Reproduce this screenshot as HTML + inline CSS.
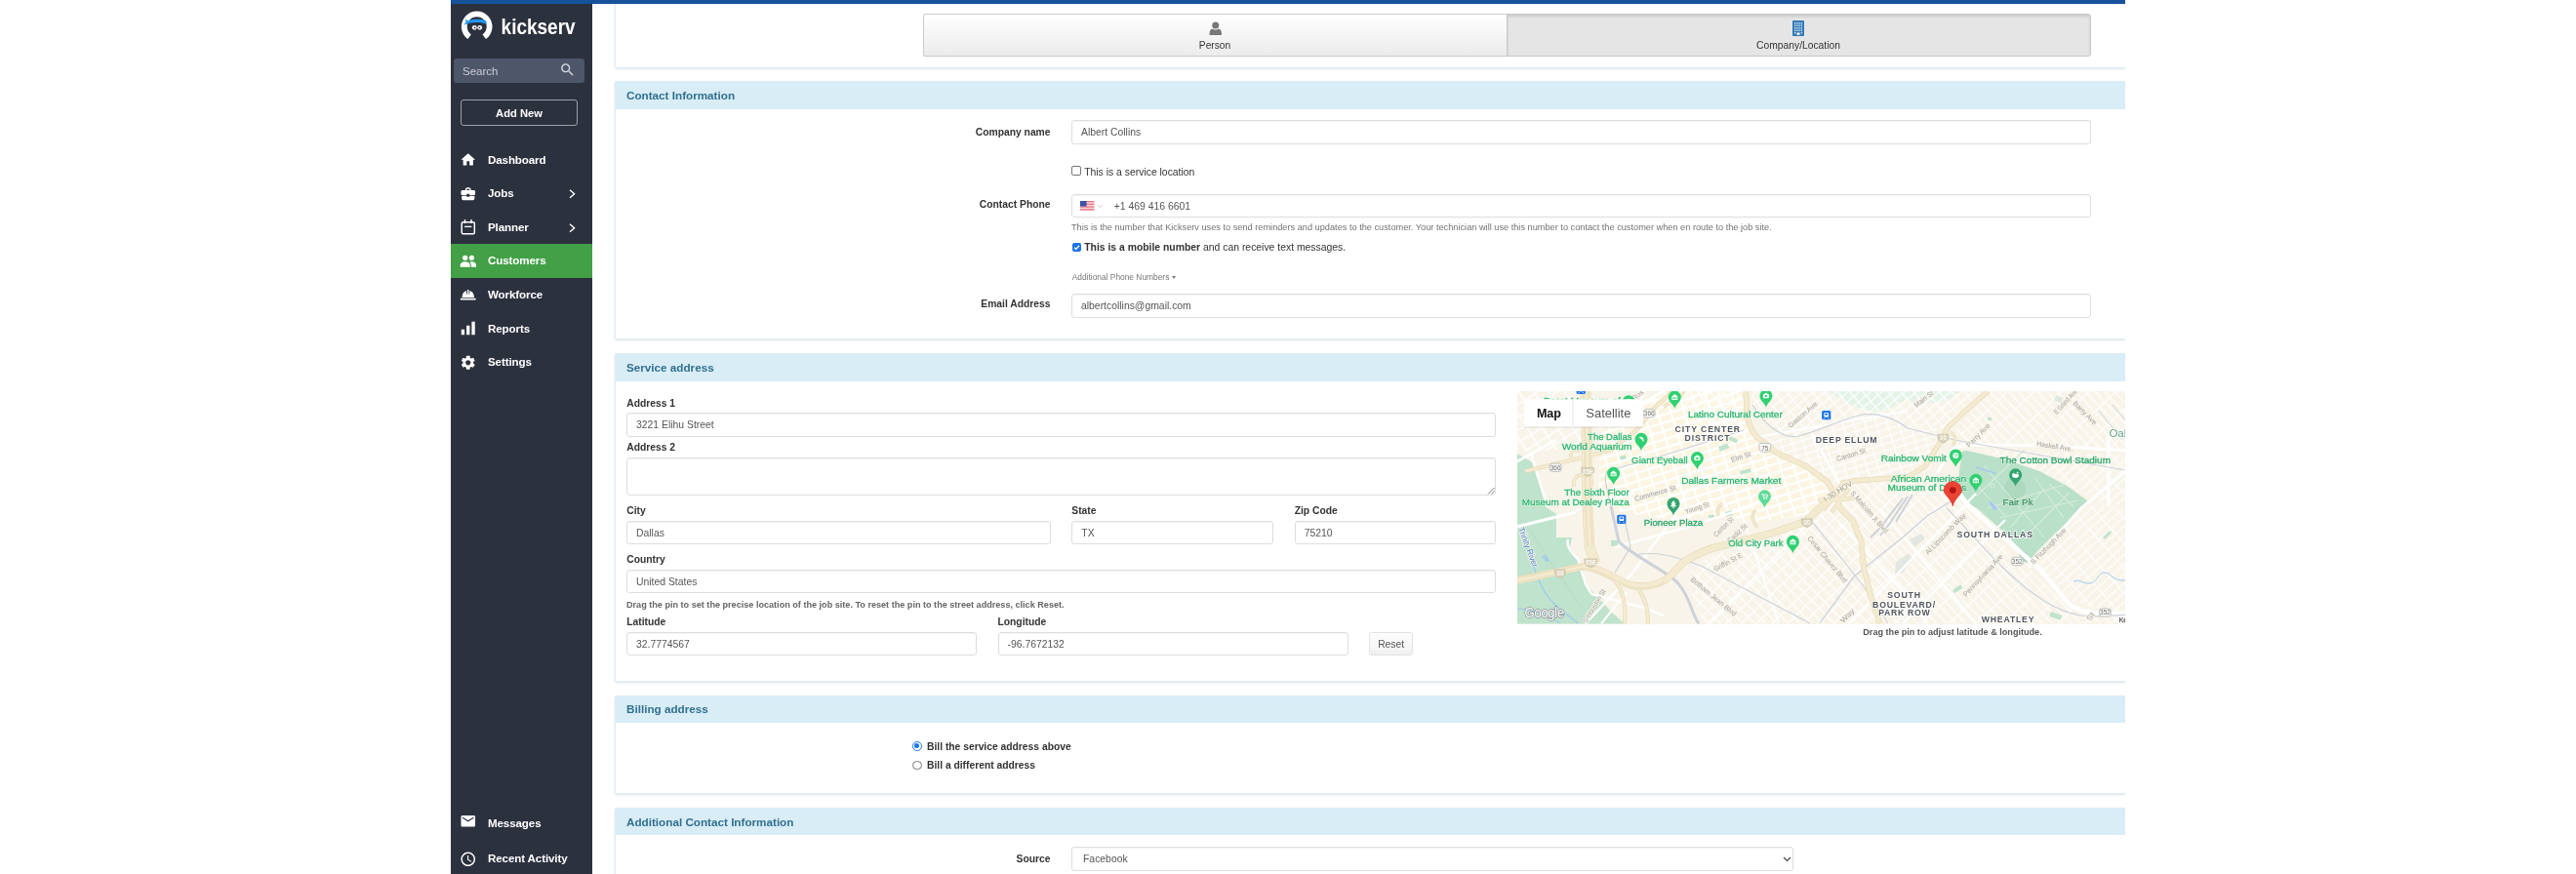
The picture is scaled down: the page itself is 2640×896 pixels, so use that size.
<!DOCTYPE html>
<html lang="en">
<head>
<meta charset="utf-8">
<title>Kickserv - Edit Customer</title>
<style>
*{box-sizing:border-box}
html,body{margin:0;padding:0}
body{width:2640px;height:896px;background:#fff;position:relative;overflow:hidden;font-family:"Liberation Sans",sans-serif;font-size:10.3px;color:#333}
#app{will-change:transform;position:absolute;left:462px;top:0;width:1716px;height:896px;overflow:hidden;background:#fff}
.abs{position:absolute}
#topbar{position:absolute;left:0;top:0;width:1716px;height:4px;background:#16539a;z-index:5}
#side{position:absolute;left:0;top:0;width:145px;height:896px;background:#2c313e}
.nav{position:absolute;left:0;width:145px;height:35px;color:#fff;font-weight:bold;font-size:11.6px;letter-spacing:-.12px}
.nav span{position:absolute;left:38px;top:-1px;line-height:35px;white-space:nowrap}
.nav svg{position:absolute}
.nav.on{background:#43a047}
.panel{position:absolute;left:168px;width:1600px;background:#fff;border:1px solid #dcedf5;border-radius:2px;box-shadow:0 1px 3px rgba(0,0,0,.11)}
.ph{position:absolute;left:169px;width:1600px;height:28.200px;margin-top:.8px;background:#d9edf7;border-radius:1px 1px 0 0;color:#31708f;font-weight:bold;font-size:11.7px;line-height:28.400px;padding-left:11px;white-space:nowrap}
.lbl{position:absolute;font-weight:bold;white-space:nowrap;color:#333;line-height:12px;margin-top:.9px}
.rlbl{position:absolute;font-weight:bold;white-space:nowrap;color:#333;line-height:12px;text-align:right;width:200px;margin-top:.9px}
.inp{position:absolute;height:24.500px;border:1px solid #dedede;border-radius:3px;background:#fff;box-shadow:inset 0 1px 1px rgba(0,0,0,.04);color:#555;line-height:23.800px;padding-left:9px;white-space:nowrap;overflow:hidden;font-size:10.4px}
.t{position:absolute;white-space:nowrap;line-height:12px;margin-top:.9px}
</style>
</head>
<body>
<div id="app">

<!-- SIDEBAR -->
<div id="side">
  <svg class="abs" style="left:0;top:0" width="145" height="50" viewBox="0 0 145 50">
    <path d="M19.120 37.740A12.900 12.900 0 1 1 34.280 37.740" fill="none" stroke="#fff" stroke-width="5.800"/>
    <path d="M17.300 24.600C20 22.500 33.500 22.500 36.600 24.900L36.200 21.200C32 19.300 21 19.300 17.600 21.400Z" fill="#2196f3"/>
    <path d="M18 21.800L14.800 19.200L15.600 22.300L13.400 25.600L17.600 24.300Z" fill="#2196f3"/>
    <circle cx="24.300" cy="28.300" r="2.400" fill="#fff"/><circle cx="29.700" cy="28.300" r="2.400" fill="#fff"/>
    <circle cx="24.600" cy="28.400" r=".9" fill="#2c313e"/><circle cx="29.400" cy="28.400" r=".9" fill="#2c313e"/>
    <text x="51.600" y="34.500" font-family="Liberation Sans, sans-serif" font-size="22.800" font-weight="bold" fill="#fff" textLength="76" lengthAdjust="spacingAndGlyphs">kickserv</text>
  </svg>
  <div class="abs" id="search" style="left:3px;top:60px;width:134px;height:25px;background:#4e576a;border-radius:3px"></div>
  <div class="t" style="left:12px;top:66.300px;font-size:11.500px;color:#c9cdd6;line-height:13px">Search</div>
  <svg class="abs" style="left:110.500px;top:63.200px" width="17" height="17" viewBox="0 0 24 24"><path fill="#d5d8df" d="M15.500 14h-.79l-.28-.27C15.410 12.590 16 11.110 16 9.500 16 5.910 13.090 3 9.500 3S3 5.910 3 9.500 5.910 16 9.500 16c1.610 0 3.090-.59 4.230-1.570l.27.28v.79l5 4.990L20.490 19l-4.990-5zm-6 0C7.010 14 5 11.990 5 9.500S7.010 5 9.500 5 14 7.010 14 9.500 11.990 14 9.500 14z"/></svg>
  <div class="abs" id="addnew" style="left:10px;top:102px;width:120px;height:27px;border:1px solid #9da1aa;border-radius:3px;color:#fff;font-weight:bold;font-size:11.200px;line-height:26px;text-align:center">Add New</div>
  <div class="nav" style="top:146.5px"><svg style="left:8.950px;top:8.750px" width="17.500" height="17.500" viewBox="0 0 24 24"><path fill="#fff" d="M10 20v-6h4v6h5v-8h3L12 3 2 12h3v8z"/></svg><span>Dashboard</span></div>
  <div class="nav" style="top:181px"><svg style="left:8.950px;top:8.750px" width="17.500" height="17.500" viewBox="0 0 24 24"><path fill="#fff" d="M10 16v-1H3.010L3 19c0 1.110.89 2 2 2h14c1.110 0 2-.89 2-2v-4h-7v1h-4zm10-9h-4.010V5l-2-2h-4l-2 2v2H4c-1.100 0-2 .9-2 2v3c0 1.110.89 2 2 2h6v-2h4v2h6c1.100 0 2-.9 2-2V9c0-1.100-.9-2-2-2zm-6 0h-4V5h4v2z"/></svg><svg style="left:121px;top:13px" width="7" height="9.500" viewBox="0 0 7 9.500"><path d="M1 .8l4.600 3.950L1 8.700" fill="none" stroke="#fff" stroke-width="1.400"/></svg><span>Jobs</span></div>
  <div class="nav" style="top:215.5px"><svg style="left:8.950px;top:8.750px" width="17.500" height="17.500" viewBox="0 0 24 24"><rect x="3" y="5" width="18" height="16.500" rx="2" fill="none" stroke="#fff" stroke-width="2"/><path d="M7.500 1.500v5.500M16.500 1.500v5.500M7 11.500h10" stroke="#fff" stroke-width="2" fill="none"/></svg><svg style="left:121px;top:13px" width="7" height="9.500" viewBox="0 0 7 9.500"><path d="M1 .8l4.600 3.950L1 8.700" fill="none" stroke="#fff" stroke-width="1.400"/></svg><span>Planner</span></div>
  <div class="nav on" style="top:250px"><svg style="left:8.950px;top:8.750px" width="17.500" height="17.500" viewBox="0 0 24 24"><circle cx="7.800" cy="7.300" r="3.700" fill="#fff"/><circle cx="17" cy="7.300" r="3.500" fill="#fff"/><path fill="#fff" d="M.8 20.200v-2.400c0-3.200 3.200-5.100 7-5.100s7 1.900 7 5.100v2.400z"/><path fill="#fff" d="M16.200 20.200v-2.600c0-1.900-.8-3.400-2.100-4.500.9-.3 1.900-.4 2.900-.4 3.600 0 6.400 1.800 6.400 4.900v2.600z"/></svg><span>Customers</span></div>
  <div class="nav" style="top:284.5px"><svg style="left:8.950px;top:8.750px" width="17.500" height="17.500" viewBox="0 0 24 24"><path fill="#fff" d="M3.500 16.500C3.500 11.500 6 8 9.500 7l.7 5h.8V5.500h2V12h.8l.7-5C18 8 20.500 11.500 20.500 16.500zM2 17.500h20c.6 0 1 .4 1 1v.5c0 .6-.4 1-1 1H2c-.6 0-1-.4-1-1V18.500c0-.6.4-1 1-1z"/></svg><span>Workforce</span></div>
  <div class="nav" style="top:319.5px"><svg style="left:8.950px;top:8.750px" width="17.500" height="17.500" viewBox="0 0 24 24"><path fill="#fff" d="M17 2.500h4.600v18.500H17zM2.400 13.500H7V21H2.400zM9.700 8h4.600v13H9.700z"/></svg><span>Reports</span></div>
  <div class="nav" style="top:354px"><svg style="left:8.950px;top:8.750px" width="17.500" height="17.500" viewBox="0 0 24 24"><path fill="#fff" d="M19.140 12.940c.04-.3.06-.61.06-.94 0-.32-.02-.64-.07-.94l2.030-1.580c.18-.14.23-.41.120-.61l-1.920-3.320c-.12-.22-.37-.29-.59-.22l-2.390.96c-.5-.38-1.030-.7-1.620-.94l-.36-2.540c-.04-.24-.24-.41-.48-.41h-3.840c-.24 0-.43.170-.47.410l-.36 2.540c-.59.240-1.130.570-1.620.94l-2.390-.96c-.22-.08-.47 0-.59.220L2.740 8.870c-.12.210-.08.470.120.610l2.030 1.580c-.05.3-.09.630-.09.940s.02.640.07.940l-2.030 1.580c-.18.140-.23.410-.12.610l1.920 3.320c.12.220.37.290.59.220l2.390-.96c.5.380 1.030.7 1.620.94l.36 2.540c.05.240.24.410.48.410h3.840c.24 0 .44-.17.470-.41l.36-2.540c.59-.24 1.130-.56 1.620-.94l2.390.96c.22.080.47 0 .59-.22l1.920-3.320c.12-.22.07-.47-.12-.61l-2.010-1.580zM12 15.600c-1.980 0-3.600-1.620-3.600-3.600s1.620-3.600 3.600-3.600 3.600 1.620 3.600 3.600-1.620 3.600-3.600 3.600z"/></svg><span>Settings</span></div>
  <div class="nav" style="top:826.5px"><svg style="left:8.950px;top:6.350px" width="17.500" height="17.500" viewBox="0 0 24 24"><path fill="#fff" d="M20 4H4c-1.100 0-1.990.9-1.990 2L2 18c0 1.100.9 2 2 2h16c1.100 0 2-.9 2-2V6c0-1.100-.9-2-2-2zm0 4l-8 5-8-5V6l8 5 8-5v2z"/></svg><span>Messages</span></div>
  <div class="nav" style="top:863px"><svg style="left:8.950px;top:8.750px" width="17.500" height="17.500" viewBox="0 0 24 24"><path fill="#fff" d="M11.990 2C6.470 2 2 6.480 2 12s4.470 10 9.990 10C17.520 22 22 17.520 22 12S17.520 2 11.990 2zM12 20c-4.420 0-8-3.580-8-8s3.580-8 8-8 8 3.580 8 8-3.580 8-8 8zm.5-13H11v6l5.250 3.150.75-1.230-4.500-2.670z"/></svg><span>Recent Activity</span></div>
</div>

<!-- MAIN -->
<div id="main">
  <!-- top panel with type toggle -->
  <div class="panel" style="top:-20px;height:90.300px"></div>

  <!-- type toggle -->
  <div class="abs" style="left:484px;top:14px;width:599px;height:43.5px;border:1px solid #ccc;border-right:none;border-radius:3px 0 0 3px;background:linear-gradient(#fff,#ebebeb);box-shadow:0 1px 0 rgba(0,0,0,.04)"></div>
  <div class="abs" style="left:1082px;top:14px;width:599px;height:43.5px;border:1px solid #c6c6c6;border-radius:0 3px 3px 0;background:#e5e5e5;box-shadow:inset 0 2px 3px rgba(0,0,0,.11)"></div>
  <svg class="abs" style="left:776.5px;top:21.5px" width="13.5" height="14.5" viewBox="0 0 27 29"><circle cx="13.5" cy="8" r="7" fill="#777"/><path d="M1 25.5c0-6.5 2.5-10 6-10.5 2 1.600 4 2.200 6.500 2.200s4.500-.6 6.500-2.200c3.500.5 6 4 6 10.500 0 2-1.500 3.300-3.500 3.300h-18c-2 0-3.500-1.300-3.500-3.300z" fill="#777"/></svg>
  <div class="t" style="left:683px;top:39.900px;width:200px;text-align:center;font-size:10.200px;color:#333">Person</div>
  <svg class="abs" style="left:1375px;top:20.800px" width="12" height="16" viewBox="0 0 24 32"><rect x="0" y="0" width="24" height="32" rx="1.500" fill="#337ab7"/><g fill="#dbe9f5"><rect x="4" y="4" width="2.500" height="3"/><rect x="8.500" y="4" width="2.500" height="3"/><rect x="13" y="4" width="2.500" height="3"/><rect x="17.500" y="4" width="2.500" height="3"/><rect x="4" y="9" width="2.500" height="3"/><rect x="8.500" y="9" width="2.500" height="3"/><rect x="13" y="9" width="2.500" height="3"/><rect x="17.500" y="9" width="2.500" height="3"/><rect x="4" y="14" width="2.500" height="3"/><rect x="8.500" y="14" width="2.500" height="3"/><rect x="13" y="14" width="2.500" height="3"/><rect x="17.500" y="14" width="2.500" height="3"/><rect x="4" y="19" width="2.500" height="3"/><rect x="8.500" y="19" width="2.500" height="3"/><rect x="13" y="19" width="2.500" height="3"/><rect x="17.500" y="19" width="2.500" height="3"/><rect x="4" y="24" width="2.500" height="3"/><rect x="17.500" y="24" width="2.500" height="3"/><rect x="9" y="25" width="6" height="4.500" fill="#fff"/></g></svg>
  <div class="t" style="left:1281px;top:39.800px;width:200px;text-align:center;font-size:10.300px;color:#333">Company/Location</div>

  <!-- Contact Information -->
  <div class="panel" style="top:83px;height:264.700px"></div>
  <div class="ph" style="top:83px">Contact Information</div>

  <div class="rlbl" style="left:414.500px;top:129.400px">Company name</div>
  <div class="inp" style="left:636px;top:123.300px;width:1045px">Albert Collins</div>

  <div class="abs" style="left:636.200px;top:170px;width:9.600px;height:9.600px;border:1px solid #767676;border-radius:2px;background:#fff"></div>
  <div class="t" style="left:649.200px;top:170.200px;font-size:10.400px">This is a service location</div>

  <div class="rlbl" style="left:414.500px;top:203.300px">Contact Phone</div>
  <div class="inp" style="left:636px;top:198.700px;width:1045px;padding-left:42.800px">+1 469 416 6601</div>
  <svg class="abs" style="left:645px;top:205.700px" width="14.500" height="10.300" viewBox="0 0 29 20.600"><rect width="29" height="20.600" fill="#fff"/><g fill="#e25465"><rect y="0" width="29" height="1.600"/><rect y="3.170" width="29" height="1.600"/><rect y="6.340" width="29" height="1.600"/><rect y="9.510" width="29" height="1.600"/><rect y="12.680" width="29" height="1.600"/><rect y="15.850" width="29" height="1.600"/><rect y="19" width="29" height="1.600"/></g><rect width="13" height="11.100" fill="#3f51a8"/></svg>
  <svg class="abs" style="left:662.500px;top:209.500px" width="5" height="3.500" viewBox="0 0 10 7"><path d="M1 1l4 4 4-4" fill="none" stroke="#bbb" stroke-width="1.600"/></svg>
  <div class="t" id="help1" style="left:636px;top:227.300px;font-size:9.210px;color:#737373;line-height:10px">This is the number that Kickserv uses to send reminders and updates to the customer. Your technician will use this number to contact the customer when en route to the job site.</div>

  <div class="abs" style="left:636.700px;top:249px;width:9px;height:9px;border-radius:2px;background:#1a73e8"></div>
  <svg class="abs" style="left:636.700px;top:249px" width="9" height="9" viewBox="0 0 18 18"><path d="M4 9.500l3.500 3.500L14 5.500" fill="none" stroke="#fff" stroke-width="2.400"/></svg>
  <div class="t" id="mob" style="left:649.200px;top:247.400px;font-size:10.400px"><b>This is a mobile number</b> and can receive text messages.</div>

  <div class="t" id="addl" style="left:636.700px;top:277.900px;font-size:8.400px;color:#777;line-height:10px">Additional Phone Numbers <span style="display:inline-block;width:0;height:0;border-left:2.600px solid transparent;border-right:2.600px solid transparent;border-top:3px solid #777;vertical-align:1px;margin-left:.5px"></span></div>

  <div class="rlbl" style="left:414.500px;top:305.100px">Email Address</div>
  <div class="inp" style="left:636px;top:301px;width:1045px">albertcollins@gmail.com</div>

  <!-- Service address -->
  <div class="panel" style="top:362px;height:337.200px"></div>
  <div class="ph" style="top:362px">Service address</div>

  <div class="lbl" style="left:180.300px;top:406.700px">Address 1</div>
  <div class="inp" style="left:180px;top:423.300px;width:891.400px">3221 Elihu Street</div>
  <div class="lbl" style="left:180.300px;top:452.600px">Address 2</div>
  <div class="inp" style="left:180px;top:469.400px;width:891.400px;height:39px"></div>
  <svg class="abs" style="left:1062px;top:499px" width="8" height="8" viewBox="0 0 8 8"><path d="M7.500 1L1 7.500M7.500 4.500L4.500 7.500" stroke="#555" stroke-width=".8" fill="none"/></svg>
  <div class="lbl" style="left:180.300px;top:517.100px">City</div>
  <div class="inp" style="left:180px;top:533.600px;width:434.700px">Dallas</div>
  <div class="lbl" style="left:636.300px;top:517.100px">State</div>
  <div class="inp" style="left:636.300px;top:533.600px;width:206.400px">TX</div>
  <div class="lbl" style="left:864.700px;top:517.100px">Zip Code</div>
  <div class="inp" style="left:864.700px;top:533.600px;width:206.700px">75210</div>
  <div class="lbl" style="left:180.300px;top:567.600px">Country</div>
  <div class="inp" style="left:180px;top:583.600px;width:891.400px">United States</div>
  <div class="t" id="help2" style="left:180px;top:614.500px;font-size:9.100px;font-weight:bold;color:#666;line-height:10px">Drag the pin to set the precise location of the job site. To reset the pin to the street address, click Reset.</div>
  <div class="lbl" style="left:180.300px;top:631.300px">Latitude</div>
  <div class="inp" style="left:180px;top:647.800px;width:358.900px">32.7774567</div>
  <div class="lbl" style="left:560.500px;top:631.300px">Longitude</div>
  <div class="inp" style="left:560.500px;top:647.800px;width:359.100px">-96.7672132</div>
  <div class="abs" style="left:940.900px;top:647.800px;width:45.400px;height:24px;border:1px solid #e2e2e2;border-radius:3px;background:linear-gradient(#fdfdfd,#f1f1f1);color:#555;font-size:10.300px;line-height:23.600px;text-align:center">Reset</div>

  <!-- MAP -->
  <div class="abs" id="map" style="left:1093px;top:401.400px;width:640px;height:238.400px;background:#f8f4e8;overflow:hidden"><svg width="640" height="238.4" viewBox="0 0 640 238.4" style="position:absolute;left:0;top:0;font-family:'Liberation Sans',sans-serif">
<defs>
<pattern id="g45" width="8.4" height="11" patternUnits="userSpaceOnUse" patternTransform="rotate(-44)"><path d="M0 .8H8.4M.8 0V11" stroke="#fff" stroke-width="1.2" fill="none"/></pattern>
<pattern id="g45b" width="7.2" height="19" patternUnits="userSpaceOnUse" patternTransform="rotate(-43)"><path d="M0 .8H7.2M.8 0V19" stroke="#fff" stroke-width="1.15" fill="none"/></pattern>
<pattern id="g45c" width="17" height="7.2" patternUnits="userSpaceOnUse" patternTransform="rotate(-42)"><path d="M0 .8H17M.8 0V7.2" stroke="#fff" stroke-width="1.15" fill="none"/></pattern>
<pattern id="gdt" width="13" height="8.200" patternUnits="userSpaceOnUse" patternTransform="rotate(-17)"><rect width="13" height="8.200" fill="#fbf5e1"/><path d="M0 1.100H13M1.100 0V8.200" stroke="#fff" stroke-width="2.200" fill="none"/></pattern>
<pattern id="gnw" width="13" height="11" patternUnits="userSpaceOnUse" patternTransform="rotate(-33)"><path d="M0 1H13M1 0V11" stroke="#fff" stroke-width="1.6" fill="none"/></pattern>
<pattern id="gn" width="10" height="7.5" patternUnits="userSpaceOnUse" patternTransform="rotate(-40)"><path d="M0 .8H10M.8 0V7.5" stroke="#fff" stroke-width="1.25" fill="none"/></pattern>
<pattern id="gde" width="11" height="7" patternUnits="userSpaceOnUse" patternTransform="rotate(-17)"><path d="M0 .8H11M.8 0V7" stroke="#fff" stroke-width="1.3" fill="none"/></pattern>
</defs>
<rect width="640" height="238.4" fill="#f8f4e9"/>
<path d="M318 0L400 0L400 8L372 22L352 18L332 8Z" fill="#e3f3e6"/>
<path d="M400 0L455 0L440 10L410 14L400 8Z" fill="#e6f4e8"/>
<path d="M0 0H66V60L0 62Z" fill="url(#gnw)"/>
<path d="M84 38L100 30L150 0H232L236 28L246 47L266 63L296 77L318 93L326 108L300 126L250 134L200 128L160 132L120 126L98 122L84 110Z" fill="url(#gdt)"/>
<path d="M172 0H232L236 28L246 47L200 40L160 10Z" fill="url(#gn)"/>
<path d="M240 0H482L440 38L400 38C390 30 370 22 350 25S310 38 288 46C270 50 250 30 241 14Z" fill="url(#gn)"/>
<path d="M246 46C258 50 274 50 288 46S330 30 350 25S390 30 400 38L440 38L430 56L418 76L400 84L345 91L330 95L296 76L266 62Z" fill="url(#gde)"/>
<path d="M486 0H640V60L462 54L448 40Z" fill="url(#g45b)"/>
<path d="M470 60L640 66V120L590 112L564 96L535 81L500 69Z" fill="url(#g45c)"/>
<path d="M180 178L240 152L300 133L328 112L345 135L352 155L355 182L362 210L371 238.4H190L176 200Z" fill="url(#g45)"/>
<path d="M345 95L400 88L432 84L450 106L520 178L560 216L600 228L640 229V238.4H375L364 210L357 182L354 154L345 132L332 112Z" fill="url(#g45b)"/>
<path d="M590 116L640 124V226L600 225L566 214L540 184L526 176L552 146L578 121Z" fill="url(#g45c)"/>
<path d="M56 120H66V170L60 168L54 160Z" fill="#f8f4e9"/>
<path d="M0 64L15 73L30 119L40 126V150H56L54 160L60 170L66 178L70 198L88 217L96 226L110 238.4H0Z" fill="#bfe3cc"/>
<path d="M40 128H56V150H40Z" fill="#f8f4e9"/>
<path d="M17 180C22 195 26 205 34 214S50 228 62 238" fill="none" stroke="#9ec5f0" stroke-width="1.100"/>
<path d="M0 223C14 224 24 226 34 232L44 238" fill="none" stroke="#9ec5f0" stroke-width="1"/>
<path d="M25 169l4 6 4-1-3-6z" fill="#a8ccf0"/>
<path d="M8 134C18 150 30 170 44 190S60 215 70 226" fill="none" stroke="#a9d3b9" stroke-width=".8" stroke-dasharray="2 1.500"/>
<path d="M0 139L60 124" stroke="#fff" stroke-width="3.200" fill="none"/>
<path d="M0 72L14 64L40 50" stroke="#fff" stroke-width="2.600" fill="none"/>
<path d="M14 64L31 119" stroke="#fff" stroke-width="2.400" fill="none"/>
<path d="M52 152C50 158 55 166 62 172L70 198L76 208" stroke="#fff" stroke-width="2.400" fill="none"/>
<path d="M70 238.400L102 204L120 184" stroke="#fff" stroke-width="2.400" fill="none"/>
<path d="M76 208L130 222L150 230" stroke="#fff" stroke-width="2.400" fill="none"/>
<path d="M86 238.400L112 206" stroke="#fff" stroke-width="2.200" fill="none"/>
<path d="M60 122L84 116L120 104" stroke="#fff" stroke-width="2.400" fill="none"/>
<path d="M456 61.500L461 61L500 70L535 82L564 97.500L585 113L577 120L565 133L551 146L532 165L524 175L519 173L512.600 159.400L501.600 147L488 135L471 120L459 113L451 105L453 82Z" fill="#b9e0c8"/>
<circle cx="510" cy="100" r="11" fill="#aed9bf"/>
<path d="M512 163C516 160 523 166 525 172C524 177 520 176 517 173Z" fill="#a5d4b6"/>
<g fill="none" stroke="#d5ecdd" stroke-width="1.100"><path d="M470 108L520 60M482 120L560 96M494 130L575 112M505 140L540 100M520 150L566 104M478 76L540 150M465 90L500 128M530 88L560 130M545 95L570 118"/><circle cx="487" cy="97" r="2.200"/></g>
<path d="M470 78L490 84" stroke="#a8c8ef" stroke-width="1.800"/>
<path d="M484 112c3 1 6 5 8 9l-3 1c-3-3-5-6-5-10z" fill="#a8c8ef"/>
<rect x="30" y="27" width="8" height="5" fill="#bfe3cc" transform="rotate(-20 30 27)"/>
<rect x="105" y="67" width="6" height="4" fill="#bfe3cc" transform="rotate(-15 105 67)"/>
<rect x="218" y="46" width="9" height="4" fill="#bfe3cc" transform="rotate(25 218 46)"/>
<rect x="206" y="57" width="10" height="5" fill="#bfe3cc" transform="rotate(-20 206 57)"/>
<rect x="228" y="82" width="11" height="4" fill="#bfe3cc" transform="rotate(-15 228 82)"/>
<rect x="96" y="153" width="7" height="6" fill="#bfe3cc" transform="rotate(0 96 153)"/>
<rect x="196" y="127" width="6" height="3" fill="#bfe3cc" transform="rotate(0 196 127)"/>
<rect x="213" y="124" width="7" height="5" fill="#bfe3cc" transform="rotate(-15 213 124)"/>
<rect x="482" y="27" width="4" height="3" fill="#bfe3cc" transform="rotate(0 482 27)"/>
<rect x="600" y="150" width="10" height="3" fill="#bfe3cc" transform="rotate(-45 600 150)"/>
<rect x="446" y="204" width="10" height="4" fill="#bfe3cc" transform="rotate(-35 446 204)"/>
<rect x="547" y="226" width="12" height="5" fill="#bfe3cc" transform="rotate(20 547 226)"/>
<path d="M388 175l14-9 3 6-10 14-8 3zM402 152l12-6 4 5-11 9z" fill="#e2e8e0"/>
<rect x="552" y="4" width="8" height="6" fill="#dfe9df" transform="rotate(20 552 4)"/>
<path d="M449 100L464 119L537 184L565 218C575 226 590 228 600 228H640" stroke="#fff" stroke-width="4.8" fill="none" stroke-linejoin="round"/>
<path d="M524 180L578 120L640 68" stroke="#fff" stroke-width="3.2" fill="none" stroke-linejoin="round"/>
<path d="M446 60L460 55L545 56L640 62" stroke="#fff" stroke-width="3.2" fill="none" stroke-linejoin="round"/>
<path d="M606 45V119" stroke="#fff" stroke-width="3" fill="none" stroke-linejoin="round"/>
<path d="M430 84L446 60L452 50" stroke="#fff" stroke-width="3" fill="none" stroke-linejoin="round"/>
<path d="M84 38L150 0" stroke="#fff" stroke-width="2.6" fill="none" stroke-linejoin="round"/>
<path d="M100 160L172 140L240 118" stroke="#fff" stroke-width="2.4" fill="none" stroke-linejoin="round"/>
<path d="M120 184L160 130L175 100" stroke="#fff" stroke-width="2.4" fill="none" stroke-linejoin="round"/>
<path d="M330 135L400 210L420 238" stroke="#fff" stroke-width="2.6" fill="none" stroke-linejoin="round"/>
<path d="M371 120L470 238" stroke="#fff" stroke-width="2.4" fill="none" stroke-linejoin="round"/>
<path d="M340 238L470 105" stroke="#fff" stroke-width="2.4" fill="none" stroke-linejoin="round"/>
<path d="M395 238L500 132" stroke="#fff" stroke-width="2.2" fill="none" stroke-linejoin="round"/>
<path d="M196 238L300 134" stroke="#fff" stroke-width="2.2" fill="none" stroke-linejoin="round"/>
<path d="M228 120L268 238" stroke="#fff" stroke-width="2" fill="none" stroke-linejoin="round"/>
<path d="M130 0L120 30L128 60" stroke="#fff" stroke-width="2.2" fill="none" stroke-linejoin="round"/>
<path d="M300 40L330 95" stroke="#fff" stroke-width="2.2" fill="none" stroke-linejoin="round"/>
<path d="M246 47L400 20" stroke="#fff" stroke-width="2" fill="none" stroke-linejoin="round"/>
<g fill="none" stroke="#cdd2da">
<path d="M96 118L104 154C112 164 140 178 158 191S178 228 186 238.400" stroke-width="3"/>
<path d="M110 132L116 160L100 186" stroke-width="1.200"/>
<path d="M96 118C92 100 88 90 92 82L150 66L232 40" stroke-width="1.200"/>
<path d="M241 14C250 30 270 50 288 46S330 30 350 25S390 30 400 38L448 50L640 84" stroke-width="1.200"/>
<path d="M120 168C140 164 160 168 190 180L300 238" stroke-width="1.200"/>
<path d="M303 135L355 200L380 238" stroke-width="1.200"/>
<path d="M310 238L345 190L395 150L420 128L446 112" stroke-width="1.300"/>
<path d="M395 110L372 140L362 150M400 108L380 138L372 148M405 106L388 134" stroke-width="2"/>
<path d="M440 120C470 150 500 190 540 215S600 228 640 229" stroke-width="1.200"/>
<path d="M596 20L620 50M610 14L640 50" stroke-width="1"/>
</g>
<path d="M570 195C576 192 580 198 587 197S596 186 602 186S610 195 623 194" fill="none" stroke="#9ec5f0" stroke-width="1"/>
<path d="M8 82L64.500 68.600L96 60L121 41L144 13.700L160 0" stroke="#e4d8b3" stroke-width="4.300000000000001" fill="none" stroke-linejoin="round"/>
<path d="M171 0C168 6 160 10 150 16" stroke="#e4d8b3" stroke-width="3.6" fill="none" stroke-linejoin="round"/>
<path d="M70 0L71 36L72 119.600L74 160L80 176" stroke="#e4d8b3" stroke-width="10.6" fill="none" stroke-linejoin="round"/>
<path d="M0 194L66 180C82 180 96 190 110 196.500S140 200 151 194C160 188 166 178 171.600 174.500S190 164 200 161L260 146L296 133.300L310 119.600L322 110" stroke="#e4d8b3" stroke-width="7.6" fill="none" stroke-linejoin="round"/>
<path d="M96 190C108 200 112 220 110 238.400M118 198C130 206 134 222 134 238.400" stroke="#e4d8b3" stroke-width="4.1" fill="none" stroke-linejoin="round"/>
<path d="M234.300 0L235.700 27.500C238 36 241 42 245.300 46.700L265.900 63.200L296.100 76.900L318 93.400L327.700 109.800L330.400 119.600L344.200 133.300L352.400 153.900L355.200 181.400L362 208.900L371.600 238.400" stroke="#e4d8b3" stroke-width="5.9" fill="none" stroke-linejoin="round"/>
<path d="M331.800 94.700L344.200 92L400 87.900L417.900 76.900L431.600 54.900L441.200 37.100L461.800 17.800L482.400 0" stroke="#e4d8b3" stroke-width="5.300000000000001" fill="none" stroke-linejoin="round"/>
<path d="M314 122L332 96M322 124L340 100M308 112L345 110" stroke="#e4d8b3" stroke-width="4.1" fill="none" stroke-linejoin="round"/>
<path d="M58 98C56 90 62 84 70 86S78 96 72 100" stroke="#e4d8b3" stroke-width="3.6" fill="none" stroke-linejoin="round"/>
<path d="M56 70C52 64 58 58 64 62" stroke="#e4d8b3" stroke-width="3.1" fill="none" stroke-linejoin="round"/>
<path d="M444 42C450 46 450 52 446 56" stroke="#e4d8b3" stroke-width="3.3000000000000003" fill="none" stroke-linejoin="round"/>
<path d="M206 128C204 122 206 118 210 116M246 140C240 132 240 126 244 122" stroke="#e4d8b3" stroke-width="3.3000000000000003" fill="none" stroke-linejoin="round"/>
<path d="M8 82L64.500 68.600L96 60L121 41L144 13.700L160 0" stroke="#f3ead0" stroke-width="3.2" fill="none" stroke-linejoin="round"/>
<path d="M171 0C168 6 160 10 150 16" stroke="#f3ead0" stroke-width="2.5" fill="none" stroke-linejoin="round"/>
<path d="M70 0L71 36L72 119.600L74 160L80 176" stroke="#f3ead0" stroke-width="9.5" fill="none" stroke-linejoin="round"/>
<path d="M0 194L66 180C82 180 96 190 110 196.500S140 200 151 194C160 188 166 178 171.600 174.500S190 164 200 161L260 146L296 133.300L310 119.600L322 110" stroke="#f3ead0" stroke-width="6.5" fill="none" stroke-linejoin="round"/>
<path d="M96 190C108 200 112 220 110 238.400M118 198C130 206 134 222 134 238.400" stroke="#f3ead0" stroke-width="3" fill="none" stroke-linejoin="round"/>
<path d="M234.300 0L235.700 27.500C238 36 241 42 245.300 46.700L265.900 63.200L296.100 76.900L318 93.400L327.700 109.800L330.400 119.600L344.200 133.300L352.400 153.900L355.200 181.400L362 208.900L371.600 238.400" stroke="#f3ead0" stroke-width="4.8" fill="none" stroke-linejoin="round"/>
<path d="M331.800 94.700L344.200 92L400 87.900L417.900 76.900L431.600 54.900L441.200 37.100L461.800 17.800L482.400 0" stroke="#f3ead0" stroke-width="4.2" fill="none" stroke-linejoin="round"/>
<path d="M314 122L332 96M322 124L340 100M308 112L345 110" stroke="#f3ead0" stroke-width="3" fill="none" stroke-linejoin="round"/>
<path d="M58 98C56 90 62 84 70 86S78 96 72 100" stroke="#f3ead0" stroke-width="2.5" fill="none" stroke-linejoin="round"/>
<path d="M56 70C52 64 58 58 64 62" stroke="#f3ead0" stroke-width="2" fill="none" stroke-linejoin="round"/>
<path d="M444 42C450 46 450 52 446 56" stroke="#f3ead0" stroke-width="2.2" fill="none" stroke-linejoin="round"/>
<path d="M206 128C204 122 206 118 210 116M246 140C240 132 240 126 244 122" stroke="#f3ead0" stroke-width="2.2" fill="none" stroke-linejoin="round"/>
<path d="M68 0L69 36L70 119.600L72 160M73 0L74 36L75 119.600L77 160" stroke="#e3d5ad" stroke-width=".7" fill="none"/>
<path d="M0 192L66 178M0 196L66 182C82 182 96 192 110 198.500S140 202 151 196" stroke="#e3d5ad" stroke-width=".7" fill="none"/>
<rect x="129.2" y="18.5" width="12" height="8.400" rx="3" fill="#f7f7f5" stroke="#b8b8b8" stroke-width=".8"/><text x="135.2" y="25.2" font-size="6.500" fill="#777" text-anchor="middle">366</text>
<rect x="33.1" y="74.1" width="12" height="8.400" rx="3" fill="#f7f7f5" stroke="#b8b8b8" stroke-width=".8"/><text x="39.1" y="80.8" font-size="6.500" fill="#777" text-anchor="middle">366</text>
<rect x="506.29999999999995" y="170.3" width="12" height="8.400" rx="3" fill="#f7f7f5" stroke="#b8b8b8" stroke-width=".8"/><text x="512.3" y="177.0" font-size="6.500" fill="#777" text-anchor="middle">352</text>
<rect x="596.5" y="222.8" width="12" height="8.400" rx="3" fill="#f7f7f5" stroke="#b8b8b8" stroke-width=".8"/><text x="602.5" y="229.5" font-size="6.500" fill="#777" text-anchor="middle">352</text>
<path d="M65.6 78.4h13v4c0 3-6.5 5-6.5 5s-6.5-2-6.5-5z" fill="#d9d2bd" stroke="#c5bda4" stroke-width=".6"/><text x="72.1" y="84.60000000000001" font-size="6.500" font-weight="bold" fill="#fbf8ee" text-anchor="middle">35E</text>
<path d="M68.7 171.9h13v4c0 3-6.5 5-6.5 5s-6.5-2-6.5-5z" fill="#d9d2bd" stroke="#c5bda4" stroke-width=".6"/><text x="75.2" y="178.1" font-size="6.500" font-weight="bold" fill="#fbf8ee" text-anchor="middle">35E</text>
<path d="M38.4 182.9h11v4c0 3-5.5 5-5.5 5s-5.5-2-5.5-5z" fill="#d9d2bd" stroke="#c5bda4" stroke-width=".6"/><text x="43.9" y="189.1" font-size="6.500" font-weight="bold" fill="#fbf8ee" text-anchor="middle">30</text>
<path d="M430.9 44.3h11v4c0 3-5.5 5-5.5 5s-5.5-2-5.5-5z" fill="#d9d2bd" stroke="#c5bda4" stroke-width=".6"/><text x="436.4" y="50.5" font-size="6.500" font-weight="bold" fill="#fbf8ee" text-anchor="middle">30</text>
<path d="M291.3 130.7h11v4c0 3-5.5 5-5.5 5s-5.5-2-5.5-5z" fill="#d9d2bd" stroke="#c5bda4" stroke-width=".6"/><text x="296.8" y="136.89999999999998" font-size="6.500" font-weight="bold" fill="#fbf8ee" text-anchor="middle">30</text>
<path d="M248.500 53.500h10.500l1 1.500-1 6c-2 2-8.500 2-10.500 0l-1-6z" fill="#f7f7f5" stroke="#b8b8b8" stroke-width=".8"/><text x="253.800" y="60.600" font-size="6.500" fill="#777" text-anchor="middle">75</text>
<text transform="translate(121 113) rotate(-15.9)" font-size="7.3" fill="#a3a3a3" stroke="#f8f4e9" stroke-width="1.600" paint-order="stroke" textLength="43.7" lengthAdjust="spacingAndGlyphs">Commerce St</text>
<text transform="translate(220 73) rotate(-18.0)" font-size="7.3" fill="#a3a3a3" stroke="#f8f4e9" stroke-width="1.600" paint-order="stroke" textLength="21.0" lengthAdjust="spacingAndGlyphs">Elm St</text>
<text transform="translate(328 72) rotate(-17.0)" font-size="7.3" fill="#a3a3a3" stroke="#f8f4e9" stroke-width="1.600" paint-order="stroke" textLength="30.8" lengthAdjust="spacingAndGlyphs">Canton St</text>
<text transform="translate(280 38) rotate(-40.6)" font-size="7.3" fill="#a3a3a3" stroke="#f8f4e9" stroke-width="1.600" paint-order="stroke" textLength="36.9" lengthAdjust="spacingAndGlyphs">Gaston Ave</text>
<text transform="translate(409 17) rotate(-37.9)" font-size="7.3" fill="#a3a3a3" stroke="#f8f4e9" stroke-width="1.600" paint-order="stroke" textLength="22.8" lengthAdjust="spacingAndGlyphs">Main St</text>
<text transform="translate(463 58) rotate(-45.0)" font-size="7.3" fill="#a3a3a3" stroke="#f8f4e9" stroke-width="1.600" paint-order="stroke" textLength="31.1" lengthAdjust="spacingAndGlyphs">Parry Ave</text>
<text transform="translate(532 56) rotate(9.2)" font-size="7.3" fill="#a3a3a3" stroke="#f8f4e9" stroke-width="1.600" paint-order="stroke" textLength="37.5" lengthAdjust="spacingAndGlyphs">Haskell Ave.</text>
<text transform="translate(553 24) rotate(-47.6)" font-size="7.3" fill="#a3a3a3" stroke="#f8f4e9" stroke-width="1.600" paint-order="stroke" textLength="31.1" lengthAdjust="spacingAndGlyphs">E Grand Ave</text>
<text transform="translate(569 13) rotate(45.0)" font-size="7.3" fill="#a3a3a3" stroke="#f8f4e9" stroke-width="1.600" paint-order="stroke" textLength="31.1" lengthAdjust="spacingAndGlyphs">Barry Ave</text>
<text transform="translate(341 105) rotate(48.7)" font-size="7.3" fill="#a3a3a3" stroke="#f8f4e9" stroke-width="1.600" paint-order="stroke" textLength="54.6" lengthAdjust="spacingAndGlyphs">S Malcolm X Blvd</text>
<text transform="translate(316 114) rotate(-32.7)" font-size="8" fill="#a09a86" stroke="#f8f4e9" stroke-width="1.600" paint-order="stroke" textLength="33.3" lengthAdjust="spacingAndGlyphs">I-30 HOV</text>
<text transform="translate(203 185) rotate(-28.2)" font-size="7.3" fill="#a3a3a3" stroke="#f8f4e9" stroke-width="1.600" paint-order="stroke" textLength="31.8" lengthAdjust="spacingAndGlyphs">Griffin St E</text>
<text transform="translate(297 151) rotate(50.4)" font-size="7.3" fill="#a3a3a3" stroke="#f8f4e9" stroke-width="1.600" paint-order="stroke" textLength="59.7" lengthAdjust="spacingAndGlyphs">Cesar Chavez Blvd</text>
<text transform="translate(177 194) rotate(39.4)" font-size="7.3" fill="#a3a3a3" stroke="#f8f4e9" stroke-width="1.600" paint-order="stroke" textLength="58.3" lengthAdjust="spacingAndGlyphs">Botham Jean Blvd</text>
<text transform="translate(71 238) rotate(-58.8)" font-size="7.3" fill="#a3a3a3" stroke="#f8f4e9" stroke-width="1.600" paint-order="stroke" textLength="38.6" lengthAdjust="spacingAndGlyphs">S Houston St</text>
<text transform="translate(421 168) rotate(-45.7)" font-size="7.3" fill="#a3a3a3" stroke="#f8f4e9" stroke-width="1.600" paint-order="stroke" textLength="55.9" lengthAdjust="spacingAndGlyphs">Al Lipscomb Way</text>
<text transform="translate(460 211) rotate(-47.2)" font-size="7.3" fill="#a3a3a3" stroke="#f8f4e9" stroke-width="1.600" paint-order="stroke" textLength="55.9" lengthAdjust="spacingAndGlyphs">Pennsylvania Ave</text>
<text transform="translate(529 178) rotate(-45.8)" font-size="7.3" fill="#a3a3a3" stroke="#f8f4e9" stroke-width="1.600" paint-order="stroke" textLength="48.8" lengthAdjust="spacingAndGlyphs">S Fitzhugh Ave</text>
<text transform="translate(204 150) rotate(-45.0)" font-size="7.3" fill="#a3a3a3" stroke="#f8f4e9" stroke-width="1.600" paint-order="stroke" textLength="25.5" lengthAdjust="spacingAndGlyphs">Canton St</text>
<text transform="translate(218 156) rotate(-43.4)" font-size="7.3" fill="#a3a3a3" stroke="#f8f4e9" stroke-width="1.600" paint-order="stroke" textLength="24.8" lengthAdjust="spacingAndGlyphs">Cadiz St</text>
<text transform="translate(173 126) rotate(-18.4)" font-size="7.3" fill="#a3a3a3" stroke="#f8f4e9" stroke-width="1.600" paint-order="stroke" textLength="25.3" lengthAdjust="spacingAndGlyphs">Young St</text>
<text transform="translate(334 238) rotate(-45.0)" font-size="7.3" fill="#a3a3a3" stroke="#f8f4e9" stroke-width="1.600" paint-order="stroke" textLength="17.0" lengthAdjust="spacingAndGlyphs">Way</text>
<text transform="translate(587 236) rotate(-54.5)" font-size="7.3" fill="#a3a3a3" stroke="#f8f4e9" stroke-width="1.600" paint-order="stroke" textLength="8.6" lengthAdjust="spacingAndGlyphs">St</text>
<text transform="translate(120 10) rotate(-38.7)" font-size="7.3" fill="#a3a3a3" stroke="#f8f4e9" stroke-width="1.600" paint-order="stroke" textLength="12.8" lengthAdjust="spacingAndGlyphs">Ros</text>
<text transform="translate(1 141) rotate(69.4)" font-size="8.6" fill="#3f7fd6" stroke="#f8f4e9" stroke-width="1.600" paint-order="stroke" textLength="42.7" lengthAdjust="spacingAndGlyphs">Trinity River</text>
<rect x="60.6" y="-6.1" width="9.200" height="9.200" rx="1.500" fill="#1a73e8"/><rect x="62.800000000000004" y="-4.3" width="4.800" height="4.600" rx="1" fill="#fff"/><rect x="63.7" y="-3.4" width="3" height="1.800" fill="#1a73e8"/><path d="M63.400000000000006 1.1l-.8 1.200M67.0 1.1l.8 1.200" stroke="#fff" stroke-width=".8"/>
<rect x="312.09999999999997" y="20.1" width="9.200" height="9.200" rx="1.500" fill="#1a73e8"/><rect x="314.3" y="21.9" width="4.800" height="4.600" rx="1" fill="#fff"/><rect x="315.2" y="22.8" width="3" height="1.800" fill="#1a73e8"/><path d="M314.9 27.3l-.8 1.200M318.5 27.3l.8 1.200" stroke="#fff" stroke-width=".8"/>
<rect x="102.2" y="126.70000000000002" width="9.200" height="9.200" rx="1.500" fill="#1a73e8"/><rect x="104.39999999999999" y="128.5" width="4.800" height="4.600" rx="1" fill="#fff"/><rect x="105.3" y="129.4" width="3" height="1.800" fill="#1a73e8"/><path d="M105.0 133.9l-.8 1.200M108.6 133.9l.8 1.200" stroke="#fff" stroke-width=".8"/>
<g style="filter:drop-shadow(0 0 .45px #fff) drop-shadow(0 0 .45px #fff) drop-shadow(0 0 .6px #fff)">
<text x="27" y="12.8" font-size="9.2" fill="#2eb56f" stroke="#2eb56f" stroke-width=".32" text-anchor="start" textLength="79" lengthAdjust="spacingAndGlyphs">Perot Museum of</text>
<text x="175" y="26.8" font-size="9.2" fill="#2eb56f" stroke="#2eb56f" stroke-width=".32" text-anchor="start" textLength="96.7" lengthAdjust="spacingAndGlyphs">Latino Cultural Center</text>
<text x="117.4" y="49.7" font-size="9.2" fill="#2eb56f" stroke="#2eb56f" stroke-width=".32" text-anchor="end" textLength="45.3" lengthAdjust="spacingAndGlyphs">The Dallas</text>
<text x="117.4" y="60" font-size="9.2" fill="#2eb56f" stroke="#2eb56f" stroke-width=".32" text-anchor="end" textLength="71.7" lengthAdjust="spacingAndGlyphs">World Aquarium</text>
<text x="117.1" y="74.1" font-size="9.2" fill="#2eb56f" stroke="#2eb56f" stroke-width=".32" text-anchor="start" textLength="57.6" lengthAdjust="spacingAndGlyphs">Giant Eyeball</text>
<text x="114.7" y="107.4" font-size="9.2" fill="#2eb56f" stroke="#2eb56f" stroke-width=".32" text-anchor="end" textLength="66.4" lengthAdjust="spacingAndGlyphs">The Sixth Floor</text>
<text x="114.7" y="117.4" font-size="9.2" fill="#2eb56f" stroke="#2eb56f" stroke-width=".32" text-anchor="end" textLength="109.9" lengthAdjust="spacingAndGlyphs">Museum at Dealey Plaza</text>
<text x="168.2" y="95.4" font-size="9.2" fill="#2eb56f" stroke="#2eb56f" stroke-width=".32" text-anchor="start" textLength="102.1" lengthAdjust="spacingAndGlyphs">Dallas Farmers Market</text>
<text x="372.7" y="71.8" font-size="9.2" fill="#2eb56f" stroke="#2eb56f" stroke-width=".32" text-anchor="start" textLength="67.1" lengthAdjust="spacingAndGlyphs">Rainbow Vomit</text>
<text x="460.2" y="92.6" font-size="9.2" fill="#2eb56f" stroke="#2eb56f" stroke-width=".32" text-anchor="end" textLength="77.4" lengthAdjust="spacingAndGlyphs">African American</text>
<text x="460.2" y="102.4" font-size="9.2" fill="#2eb56f" stroke="#2eb56f" stroke-width=".32" text-anchor="end" textLength="80.7" lengthAdjust="spacingAndGlyphs">Museum of Dallas</text>
<text x="494.6" y="74.2" font-size="9.2" fill="#2fa266" stroke="#2fa266" stroke-width=".32" text-anchor="start" textLength="113.4" lengthAdjust="spacingAndGlyphs">The Cotton Bowl Stadium</text>
<text x="497.5" y="117" font-size="9.2" fill="#35905c" stroke="#35905c" stroke-width=".32" text-anchor="start" textLength="31.1" lengthAdjust="spacingAndGlyphs">Fair Pk</text>
<text x="129.8" y="138.1" font-size="9.2" fill="#2fa266" stroke="#2fa266" stroke-width=".32" text-anchor="start" textLength="60.4" lengthAdjust="spacingAndGlyphs">Pioneer Plaza</text>
<text x="216.2" y="159.4" font-size="9.2" fill="#2eb56f" stroke="#2eb56f" stroke-width=".32" text-anchor="start" textLength="56.3" lengthAdjust="spacingAndGlyphs">Old City Park</text>
<text x="606.400" y="46.900" font-size="11.500" fill="#5e9b7c" stroke="#fff" stroke-width="1.600" stroke-opacity=".8" paint-order="stroke">Oak Cliff</text>
</g>
<text x="161.6" y="41.9" font-size="8.700" font-weight="bold" fill="#50555d" stroke="#fff" stroke-width="1.800" stroke-opacity=".8" paint-order="stroke" text-anchor="start" textLength="66.5" lengthAdjust="spacing">CITY CENTER</text>
<text x="171.6" y="51.1" font-size="8.700" font-weight="bold" fill="#50555d" stroke="#fff" stroke-width="1.800" stroke-opacity=".8" paint-order="stroke" text-anchor="start" textLength="46" lengthAdjust="spacing">DISTRICT</text>
<text x="305.7" y="53.3" font-size="8.700" font-weight="bold" fill="#50555d" stroke="#fff" stroke-width="1.800" stroke-opacity=".8" paint-order="stroke" text-anchor="start" textLength="62.9" lengthAdjust="spacing">DEEP ELLUM</text>
<text x="450.5" y="149.8" font-size="8.700" font-weight="bold" fill="#50555d" stroke="#fff" stroke-width="1.800" stroke-opacity=".8" paint-order="stroke" text-anchor="start" textLength="77.5" lengthAdjust="spacing">SOUTH DALLAS</text>
<text x="379.2" y="211.9" font-size="8.700" font-weight="bold" fill="#50555d" stroke="#fff" stroke-width="1.800" stroke-opacity=".8" paint-order="stroke" text-anchor="start" textLength="33.8" lengthAdjust="spacing">SOUTH</text>
<text x="364.1" y="221.9" font-size="8.700" font-weight="bold" fill="#50555d" stroke="#fff" stroke-width="1.800" stroke-opacity=".8" paint-order="stroke" text-anchor="start" textLength="64" lengthAdjust="spacing">BOULEVARD/</text>
<text x="370.3" y="230.1" font-size="8.700" font-weight="bold" fill="#50555d" stroke="#fff" stroke-width="1.800" stroke-opacity=".8" paint-order="stroke" text-anchor="start" textLength="52.4" lengthAdjust="spacing">PARK ROW</text>
<text x="475.8" y="236.7" font-size="8.700" font-weight="bold" fill="#50555d" stroke="#fff" stroke-width="1.800" stroke-opacity=".8" paint-order="stroke" text-anchor="start" textLength="53.7" lengthAdjust="spacing">WHEATLEY</text>
<path d="M0 0C-1.200-4.200-6.200-6.600-6.200-11.200A6.200 6.200 0 0 1 6.200-11.200C6.200-6.600 1.200-4.200 0 0Z" transform="translate(114 22.5) scale(1.050)" fill="#2fd171"/>
<path d="M111 10.1L114 7.699999999999999L117 10.1V13.7H111Z" fill="#fff"/><path d="M112.5 12.899999999999999V10.7M114 12.899999999999999V10.7M115.5 12.899999999999999V10.7" stroke="#2fd171" stroke-width=".8"/>
<path d="M0 0C-1.200-4.200-6.200-6.600-6.200-11.200A6.200 6.200 0 0 1 6.200-11.200C6.200-6.600 1.200-4.200 0 0Z" transform="translate(161.3 17.8) scale(1.050)" fill="#2fd171"/>
<path d="M158.3 5.4L161.3 3.0L164.3 5.4V9.0H158.3Z" fill="#fff"/><path d="M159.8 8.2V6.0M161.3 8.2V6.0M162.8 8.2V6.0" stroke="#2fd171" stroke-width=".8"/>
<path d="M0 0C-1.200-4.200-6.200-6.600-6.200-11.200A6.200 6.200 0 0 1 6.200-11.200C6.200-6.600 1.200-4.200 0 0Z" transform="translate(254.9 16.5) scale(1.050)" fill="#2fd171"/>
<rect x="251.9" y="2.8999999999999995" width="6" height="4.400" rx=".8" fill="#fff"/><rect x="253.70000000000002" y="1.8999999999999995" width="2.400" height="1.200" fill="#fff"/><circle cx="254.9" cy="5.1" r="1.200" fill="#2fd171"/>
<path d="M0 0C-1.200-4.200-6.200-6.600-6.200-11.200A6.200 6.200 0 0 1 6.200-11.200C6.200-6.600 1.200-4.200 0 0Z" transform="translate(127 61.1) scale(1.050)" fill="#2fd171"/>
<path d="M124.2 47.3c2-1.200 4-.6 5 1.200l.6 3.400-1.400-1c-.8-1.400-2-2.400-4.200-3.600z" fill="#fff"/>
<path d="M0 0C-1.200-4.200-6.200-6.600-6.200-11.200A6.200 6.200 0 0 1 6.200-11.200C6.200-6.600 1.200-4.200 0 0Z" transform="translate(184.4 80.3) scale(1.050)" fill="#2fd171"/>
<rect x="181.4" y="66.7" width="6" height="4.400" rx=".8" fill="#fff"/><rect x="183.20000000000002" y="65.7" width="2.400" height="1.200" fill="#fff"/><circle cx="184.4" cy="68.9" r="1.200" fill="#2fd171"/>
<path d="M0 0C-1.200-4.200-6.200-6.600-6.200-11.200A6.200 6.200 0 0 1 6.200-11.200C6.200-6.600 1.200-4.200 0 0Z" transform="translate(98.6 96.1) scale(1.050)" fill="#2fd171"/>
<path d="M95.6 83.7L98.6 81.3L101.6 83.7V87.3H95.6Z" fill="#fff"/><path d="M97.1 86.5V84.3M98.6 86.5V84.3M100.1 86.5V84.3" stroke="#2fd171" stroke-width=".8"/>
<path d="M0 0C-1.200-4.200-6.200-6.600-6.200-11.200A6.200 6.200 0 0 1 6.200-11.200C6.200-6.600 1.200-4.200 0 0Z" transform="translate(253.5 119.5) scale(1.050)" fill="#5edb9a"/>
<path d="M250.3 105.3h1.200l1 3.600h3.400l.9-2.600h-4.800" fill="none" stroke="#fff" stroke-width=".9"/><circle cx="252.9" cy="110.2" r=".7" fill="#fff"/><circle cx="255.5" cy="110.2" r=".7" fill="#fff"/>
<path d="M0 0C-1.200-4.200-6.200-6.600-6.200-11.200A6.200 6.200 0 0 1 6.200-11.200C6.200-6.600 1.200-4.200 0 0Z" transform="translate(449.3 77.7) scale(1.050)" fill="#2fd171"/>
<circle cx="449.3" cy="65.9" r="3" fill="#fff"/><circle cx="448.3" cy="64.9" r=".7" fill="#2fd171"/><circle cx="450.5" cy="65.30000000000001" r=".7" fill="#2fd171"/><circle cx="449.5" cy="67.10000000000001" r=".7" fill="#2fd171"/>
<path d="M0 0C-1.200-4.200-6.200-6.600-6.200-11.200A6.200 6.200 0 0 1 6.200-11.200C6.200-6.600 1.200-4.200 0 0Z" transform="translate(469.9 103) scale(1.050)" fill="#2fd171"/>
<path d="M466.9 90.60000000000001L469.9 88.2L472.9 90.60000000000001V94.2H466.9Z" fill="#fff"/><path d="M468.4 93.4V91.2M469.9 93.4V91.2M471.4 93.4V91.2" stroke="#2fd171" stroke-width=".8"/>
<path d="M0 0C-1.200-4.200-6.200-6.600-6.200-11.200A6.200 6.200 0 0 1 6.200-11.200C6.200-6.600 1.200-4.200 0 0Z" transform="translate(510.6 97.5) scale(1.050)" fill="#34a56f"/>
<path d="M507.6 85.2c0-1.200 2-1.200 2.400 0h3.600v2.600c-2 1.200-4 1.200-6 0zM512.1 82.9v2M512.1 82.9l1.600.6-1.600.6" fill="#fff" stroke="#fff" stroke-width=".5"/>
<path d="M0 0C-1.200-4.200-6.200-6.600-6.200-11.200A6.200 6.200 0 0 1 6.200-11.200C6.200-6.600 1.200-4.200 0 0Z" transform="translate(160 127.2) scale(1.050)" fill="#34a56f"/>
<path d="M160 111.9l2.600 3.600h-1.400l2 2.800h-2.600v1.600h-1.200v-1.600h-2.600l2-2.800h-1.400z" fill="#fff"/>
<path d="M0 0C-1.200-4.200-6.200-6.600-6.200-11.200A6.200 6.200 0 0 1 6.200-11.200C6.200-6.600 1.200-4.200 0 0Z" transform="translate(282.4 166) scale(1.050)" fill="#2fd171"/>
<path d="M279.4 153.6L282.4 151.2L285.4 153.6V157.2H279.4Z" fill="#fff"/><path d="M280.9 156.39999999999998V154.2M282.4 156.39999999999998V154.2M283.9 156.39999999999998V154.2" stroke="#2fd171" stroke-width=".8"/>
<path d="M446.300 118C444.600 110 437 106 437 101.800A9.300 9.300 0 0 1 455.600 101.800C455.600 106 448 110 446.300 118Z" fill="#ea4335" stroke="#c5221f" stroke-width=".5"/><circle cx="446.300" cy="101.600" r="3.300" fill="#b31412"/>
<rect x="6.900" y="8.200" width="122.100" height="28.200" rx="1.500" fill="#000" opacity=".12" transform="translate(0 1)" filter="none"/>
<rect x="6.900" y="8.200" width="122.100" height="28.200" rx="1.500" fill="#fff"/>
<path d="M57 8.200V36.400" stroke="#e6e6e6" stroke-width="1"/>
<text x="19.900" y="26.800" font-size="13" font-weight="bold" fill="#111" textLength="25.100" lengthAdjust="spacingAndGlyphs">Map</text>
<text x="70.300" y="26.800" font-size="12.800" fill="#565656" textLength="46.100" lengthAdjust="spacingAndGlyphs">Satellite</text>
<text x="7.500" y="232" font-size="14.500" fill="#fff" stroke="#8a8f96" stroke-width="1.500" paint-order="stroke" textLength="40.500" lengthAdjust="spacingAndGlyphs" letter-spacing="-.3">Google</text>
<rect x="614" y="231" width="40" height="7.400" fill="#f5f5f5" opacity=".8"/><text x="616.800" y="237.200" font-size="6.800" fill="#111">Keyboard shortcuts</text>
</svg></div>
  <div class="t" id="mapcap" style="left:1339px;top:642.300px;width:400px;text-align:center;font-size:9.100px;font-weight:bold;color:#555;line-height:10px">Drag the pin to adjust latitude &amp; longitude.</div>

  <!-- Billing address -->
  <div class="panel" style="top:712.500px;height:101.200px"></div>
  <div class="ph" style="top:712.5px">Billing address</div>

  <div class="abs" style="left:473.100px;top:760px;width:9.600px;height:9.600px;border-radius:50%;border:1.200px solid #1a73e8;background:#fff"></div>
  <div class="abs" style="left:475.300px;top:762.200px;width:5.200px;height:5.200px;border-radius:50%;background:#1a73e8"></div>
  <div class="t" style="left:488px;top:759px;font-weight:bold;font-size:10.300px">Bill the service address above</div>
  <div class="abs" style="left:473.100px;top:779.500px;width:9.600px;height:9.600px;border-radius:50%;border:1px solid #767676;background:#fff"></div>
  <div class="t" style="left:488px;top:778.500px;font-weight:bold;font-size:10.300px">Bill a different address</div>

  <!-- Additional Contact Information -->
  <div class="panel" style="top:827.5px;height:200px"></div>
  <div class="ph" style="top:827.500px;line-height:30.400px">Additional Contact Information</div>

  <div class="rlbl" style="left:414.500px;top:874.500px">Source</div>
  <div class="inp" style="left:636px;top:868.300px;width:739.500px;padding-left:11px">Facebook</div>
  <svg class="abs" style="left:1364.500px;top:877.500px" width="9" height="6" viewBox="0 0 18 12"><path d="M2 2l7 7 7-7" fill="none" stroke="#444" stroke-width="2.200"/></svg>
</div>

<div id="topbar"></div>
</div>
</body>
</html>
